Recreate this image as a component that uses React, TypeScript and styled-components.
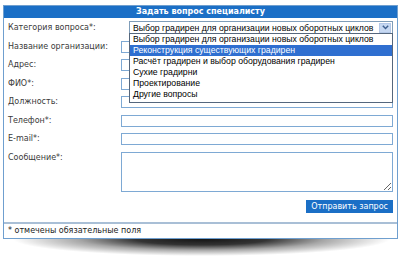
import React from "react";
import styled, { createGlobalStyle } from "styled-components";

const categories = [
  "Выбор градирен для организации новых оборотных циклов",
  "Реконструкция существующих градирен",
  "Расчёт градирен и выбор оборудования градирен",
  "Сухие градирни",
  "Проектирование",
  "Другие вопросы",
];

const fields = [
  "Название организации:",
  "Адрес:",
  "ФИО*:",
  "Должность:",
  "Телефон*:",
  "E-mail*:",
];

const App = () => {
  return (
    <>
      <GlobalStyle />
      <Frame>
        <Card>
          <Header>Задать вопрос специалисту</Header>
          <Body>
            <Row>
              <Label>Категория вопроса*:</Label>
              <SelectBox>
                <SelectValue>{categories[0]}</SelectValue>
                <ArrowButton>
                  <svg width="7" height="5" viewBox="0 0 7 5">
                    <polyline points="0.8,0.8 3.5,3.6 6.2,0.8" fill="none" stroke="#3d5f8f" strokeWidth="1.4" />
                  </svg>
                </ArrowButton>
                <Dropdown>
                  {categories.map((c, i) => (
                    <Option key={c} active={i === 1}>{c}</Option>
                  ))}
                </Dropdown>
              </SelectBox>
            </Row>
            {fields.map((f) => (
              <Row key={f}>
                <Label>{f}</Label>
                <Input type="text" />
              </Row>
            ))}
            <Row top>
              <Label>Сообщение*:</Label>
              <TextArea />
            </Row>
            <Actions>
              <SubmitButton type="button">Отправить запрос</SubmitButton>
            </Actions>
          </Body>
          <Footer>* отмечены обязательные поля</Footer>
        </Card>
        <Shadow />
      </Frame>
    </>
  );
};

const GlobalStyle = createGlobalStyle`
  body {
    margin: 0;
    background: #ffffff;
    font-family: "DejaVu Sans", Verdana, sans-serif;
  }
`;

const Frame = styled.div`
  width: 395px;
  margin: 5px 0 0 3px;
`;

const Card = styled.div`
  position: relative;
  z-index: 1;
  box-sizing: border-box;
  width: 100%;
  background: #fff;
  border: 1px solid #6f9fcf;
`;

const Shadow = styled.div`
  height: 17px;
  margin: 0 8px 0 10px;
  background: radial-gradient(
    farthest-side at 50% 0%,
    rgba(0, 0, 0, 0.92) 0%,
    rgba(0, 0, 0, 0.8) 35%,
    rgba(0, 0, 0, 0.35) 65%,
    rgba(0, 0, 0, 0) 100%
  );
`;

const Header = styled.div`
  height: 12px;
  line-height: 12px;
  background: #1b6fc6;
  color: #fff;
  font-weight: bold;
  font-size: 8px;
  text-align: center;
`;

const Body = styled.div`
  padding: 3px 4px 0 4px;
  display: flex;
  flex-direction: column;
  gap: 6.5px;
`;

const Row = styled.div<{ top?: boolean }>`
  display: grid;
  grid-template-columns: 113px minmax(0, 1fr);
  align-items: ${({ top }) => (top ? "start" : "center")};
`;

const Label = styled.div`
  font-size: 8px;
  color: #3a3a3a;
  white-space: nowrap;
  line-height: 12px;
`;

const Input = styled.input`
  box-sizing: border-box;
  height: 12px;
  width: 100%;
  margin: 0;
  padding: 0 2px;
  border: 1px solid #7ea9d4;
  background: #fff;
  outline: none;
`;

const TextArea = styled.textarea`
  box-sizing: border-box;
  height: 40px;
  width: 100%;
  margin: 0;
  padding: 2px;
  border: 1px solid #7ea9d4;
  background: #fff;
  outline: none;
  resize: both;
`;

const SelectBox = styled.div`
  position: relative;
  box-sizing: border-box;
  height: 13px;
  margin-left: 8px;
  border: 1px solid #7f9db9;
  background: #fff;
  display: flex;
  align-items: center;
  z-index: 2;
`;

const SelectValue = styled.div`
  flex: 1;
  min-width: 0;
  padding-left: 3px;
  font-family: "Liberation Sans", Arial, sans-serif;
  font-size: 8.7px;
  color: #000;
  white-space: nowrap;
  overflow: hidden;
`;

const ArrowButton = styled.div`
  flex: none;
  box-sizing: border-box;
  width: 12px;
  height: 10px;
  margin-right: 1px;
  background: #c6d8f2;
  border: 1px solid #b3c8e8;
  display: flex;
  align-items: center;
  justify-content: center;
`;

const Dropdown = styled.div`
  position: absolute;
  top: 100%;
  left: -1px;
  right: -1px;
  padding-bottom: 2px;
  border: 1px solid #55677d;
  background: #fff;
`;

const Option = styled.div<{ active?: boolean }>`
  height: 11px;
  line-height: 11px;
  padding-left: 3px;
  font-family: "Liberation Sans", Arial, sans-serif;
  font-size: 8.7px;
  white-space: nowrap;
  background: ${({ active }) => (active ? "#2f6fd0" : "#fff")};
  color: ${({ active }) => (active ? "#fff" : "#000")};
`;

const Actions = styled.div`
  display: flex;
  justify-content: flex-end;
  margin-top: 1.5px;
`;

const SubmitButton = styled.button`
  height: 13px;
  padding: 0 5px;
  margin: 0;
  border: none;
  background: #1b6fc6;
  color: #fff;
  font-family: "DejaVu Sans", Verdana, sans-serif;
  font-size: 8px;
  line-height: 13px;
`;

const Footer = styled.div`
  margin-top: 9px;
  border-top: 2px solid #a9bfd6;
  padding: 1px 4px 0;
  height: 13px;
  line-height: 12px;
  font-size: 8px;
  color: #222;
`;

export default App;
